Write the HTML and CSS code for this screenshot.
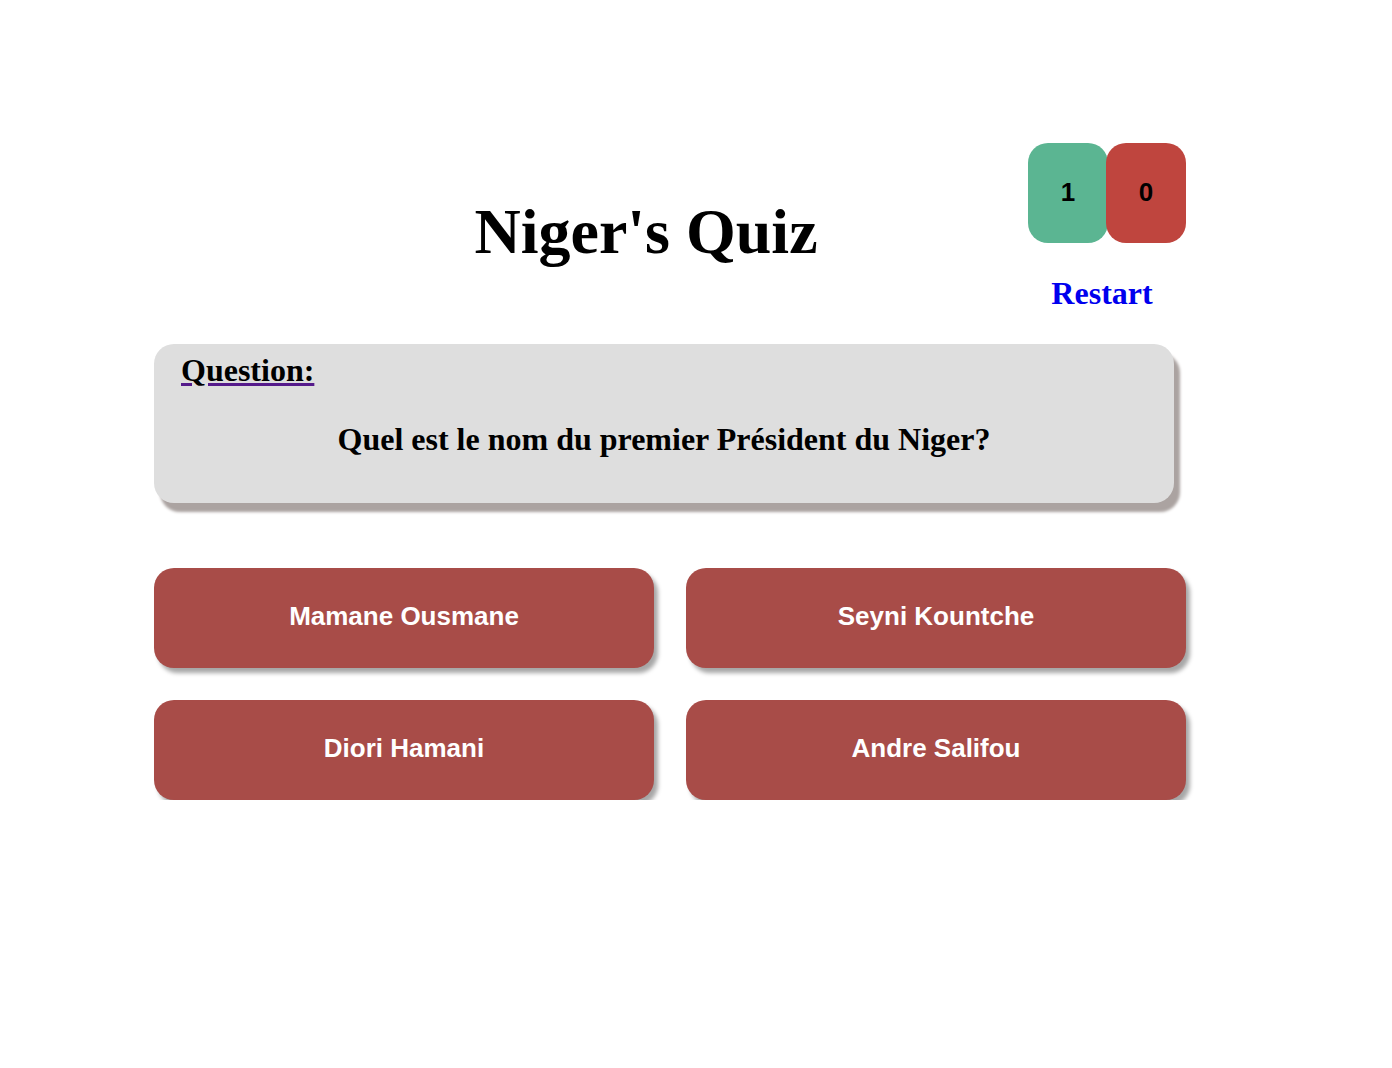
FILE: index.html
```html
<!DOCTYPE html>
<html lang="fr">
<head>
<meta charset="utf-8">
<title>Niger's Quiz</title>
<link rel="stylesheet" href="styles.css">
</head>
<body>
<div class="page">
  <header class="header">
    <div class="title-wrap">
      <h1 class="title">Niger's Quiz</h1>
    </div>
    <div class="score-col">
      <div class="scores">
        <div class="score score-good">1</div>
        <div class="score score-bad">0</div>
      </div>
      <a class="restart" href="#">Restart</a>
    </div>
  </header>

  <section class="question-box">
    <div class="question-label"><span class="label-link"><span class="label-text">Question:</span></span></div>
    <div class="question-text">Quel est le nom du premier Président du Niger?</div>
  </section>

  <section class="answers">
    <button class="answer">Mamane Ousmane</button>
    <button class="answer">Seyni Kountche</button>
    <button class="answer">Diori Hamani</button>
    <button class="answer">Andre Salifou</button>
  </section>
</div>
</body>
</html>
```

FILE: styles.css
```css
html, body {
  margin: 0;
  padding: 0;
  background: #ffffff;
}
body {
  font-family: "Liberation Serif", "Times New Roman", serif;
  color: #000;
}
.page {
  width: 1032px;
  padding: 143px 0 0 154px;
}
.header {
  display: flex;
  align-items: flex-start;
}
.title-wrap {
  flex: 1;
  padding-left: 110px;
  text-align: center;
}
.title {
  margin: 57px 0 0 0;
  font-size: 64px;
  line-height: 64px;
  font-weight: bold;
}
.score-col {
  width: 158px;
  display: flex;
  flex-direction: column;
  align-items: center;
}
.scores {
  display: flex;
}
.score {
  width: 80px;
  height: 100px;
  box-sizing: border-box;
  padding-bottom: 2px;
  border-radius: 20px;
  display: flex;
  align-items: center;
  justify-content: center;
  font-family: "Liberation Sans", Arial, sans-serif;
  font-weight: bold;
  font-size: 26px;
  color: #000;
}
.score-good {
  background: #5bb592;
}
.score-bad {
  background: #bf453e;
  margin-left: -2px;
}
.restart {
  margin-top: 32px;
  padding-right: 10px;
  font-size: 32px;
  line-height: 37px;
  font-weight: bold;
  color: #0000ee;
  text-decoration: none;
}
.question-box {
  margin-top: 32px;
  width: 1020px;
  box-sizing: border-box;
  height: 159px;
  padding-top: 8px;
  background: #dedede;
  border-radius: 20px;
  box-shadow: 6px 9px 3px #aba3a1;
}
.question-label {
  padding-left: 27px;
  font-size: 32px;
  line-height: 37px;
  font-weight: bold;
}
.label-link {
  color: #551a8b;
  text-decoration: underline;
}
.label-text {
  color: #000;
}
.question-text {
  margin-top: 32px;
  text-align: center;
  font-size: 32px;
  line-height: 37px;
  font-weight: bold;
}
.answers {
  margin-top: 65px;
  display: grid;
  grid-template-columns: 500px 500px;
  column-gap: 32px;
  row-gap: 32px;
}
.answer {
  height: 100px;
  border: none;
  border-radius: 20px;
  background: #a84c48;
  color: #ffffff;
  font-family: "Liberation Sans", Arial, sans-serif;
  font-weight: bold;
  font-size: 26px;
  box-shadow: 4px 5px 4px rgba(0, 0, 0, 0.35);
  padding: 0 0 3px 0;
  cursor: pointer;
}
```
